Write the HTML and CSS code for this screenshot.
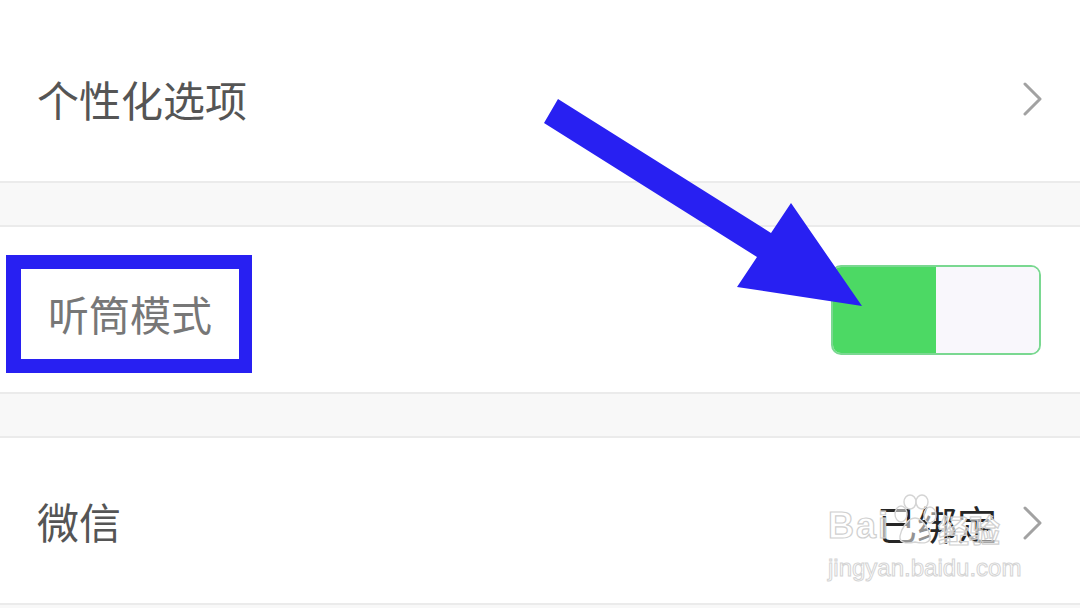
FILE: index.html
```html
<!DOCTYPE html>
<html lang="zh-CN">
<head>
    <meta charset="UTF-8">
    <meta name="viewport" content="width=device-width, initial-scale=1.0">
    <title>设置</title>
    <link rel="stylesheet" href="styles.css">
</head>
<body>
    <div class="settings">
        <div class="cell cell-first">
            <span class="cell-title">个性化选项</span>
            <svg class="chevron" viewBox="0 0 20 34"><polyline points="2,2 17,17 2,32"/></svg>
        </div>
        <div class="gap"></div>

        <div class="cell cell-marked">
            <span class="cell-title marked">听筒模式</span>
            <div class="switch">
                <span class="switch-on"></span>
                <span class="switch-off"></span>
            </div>
        </div>
        <div class="gap"></div>

        <div class="cell">
            <span class="cell-title">微信</span>
            <div class="cell-end">
                <span class="cell-value">已绑定</span>
                <svg class="chevron" viewBox="0 0 20 34"><polyline points="2,2 17,17 2,32"/></svg>
            </div>
        </div>
        <div class="gap gap-last"></div>
    </div>

    <!-- annotation arrow drawn over the screenshot -->
    <svg class="arrow" viewBox="0 0 1080 608">
        <polygon points="558,99 771,233 791,203 862,306 737,287 757,257 544,123"/>
    </svg>

    <div class="watermark">
        <div class="wm-logo">
            <span class="wm-bai">Bai</span>
            <svg class="wm-paw" viewBox="0 0 46 52">
                <ellipse cx="9" cy="20" rx="6" ry="8"/>
                <ellipse cx="18" cy="8" rx="6" ry="7"/>
                <ellipse cx="30" cy="8" rx="6" ry="7"/>
                <ellipse cx="38" cy="21" rx="6" ry="8"/>
                <path d="M23 24 C15 24 9 36 8 42 C7 49 14 50 23 48 C32 50 39 49 38 42 C37 36 31 24 23 24 Z"/>
            </svg>
            <span class="wm-jy">经验</span>
        </div>
        <div class="wm-url">jingyan.baidu.com</div>
    </div>
</body>
</html>
```

FILE: styles.css
```css
body {
    margin: 0;
    width: 1080px;
    height: 608px;
    overflow: hidden;
    background-color: #f8f8f8;
    font-family: "Noto Sans CJK SC", "Noto Sans", sans-serif;
    position: relative;
}
.settings {
    display: flex;
    flex-direction: column;
}
.cell {
    height: 165px;
    box-sizing: border-box;
    background: #fff;
    display: flex;
    align-items: center;
    justify-content: space-between;
    padding: 0 37px 0 37px;
}
.cell-first {
    height: 181px;
    padding-top: 17px;
}
.cell-marked {
    padding-left: 6px;
    padding-right: 39px;
    padding-top: 8px;
}
.cell-title {
    font-size: 42px;
    line-height: 1;
    color: #555;
}
.marked {
    font-size: 41px;
    color: #777;
    border: 14px solid #2820f2;
    border-left-width: 15px;
    border-right-width: 13px;
    padding: 24px 27px 25px 27px;
}
.gap {
    height: 42px;
    background: #f8f8f8;
    border-top: 2px solid #ebebeb;
    border-bottom: 2px solid #ebebeb;
}
.gap-last {
    height: 3px;
    border-bottom: none;
}
.chevron {
    width: 20px;
    height: 34px;
    fill: none;
    stroke: #a2a2a2;
    stroke-width: 3;
    stroke-linecap: round;
    stroke-linejoin: round;
}
.cell-end {
    display: flex;
    align-items: center;
    gap: 26px;
    margin-top: 4px;
}
.cell-value {
    font-size: 40px;
    line-height: 1;
    color: #262626;
}
.switch {
    width: 210px;
    height: 90px;
    box-sizing: border-box;
    border: 2px solid #7ad891;
    border-radius: 10px;
    overflow: hidden;
    display: flex;
    margin-top: -8px;
}
.switch-on {
    flex: 1;
    background: #4cd964;
}
.switch-off {
    flex: 1;
    background: #f9f7fc;
}
.arrow {
    position: absolute;
    left: 0;
    top: 0;
    width: 1080px;
    height: 608px;
    pointer-events: none;
}
.arrow polygon {
    fill: #2820f2;
}
.watermark {
    position: absolute;
    left: 828px;
    top: 490px;
    display: flex;
    flex-direction: column;
    align-items: flex-start;
    pointer-events: none;
}
.wm-logo {
    display: flex;
    align-items: flex-end;
    height: 56px;
}
.wm-bai {
    font-family: "Liberation Sans", sans-serif;
    font-weight: bold;
    font-size: 36px;
    letter-spacing: 2px;
    line-height: 1;
    color: rgba(255, 255, 255, 0.6);
    -webkit-text-stroke: 1.2px #d0d0d0;
    margin-bottom: 2px;
}
.wm-paw {
    width: 46px;
    height: 52px;
    fill: rgba(255, 255, 255, 0.5);
    stroke: #d4d4d4;
    stroke-width: 1.4;
    margin-left: 2px;
}
.wm-jy {
    font-size: 31px;
    line-height: 1;
    font-weight: bold;
    color: rgba(255, 255, 255, 0.6);
    -webkit-text-stroke: 1.2px #d0d0d0;
    margin-bottom: 2px;
}
.wm-url {
    font-family: "Liberation Sans", sans-serif;
    font-size: 24px;
    line-height: 1;
    margin-top: 10px;
    color: rgba(255, 255, 255, 0.6);
    -webkit-text-stroke: 1px #d4d4d4;
}
```
